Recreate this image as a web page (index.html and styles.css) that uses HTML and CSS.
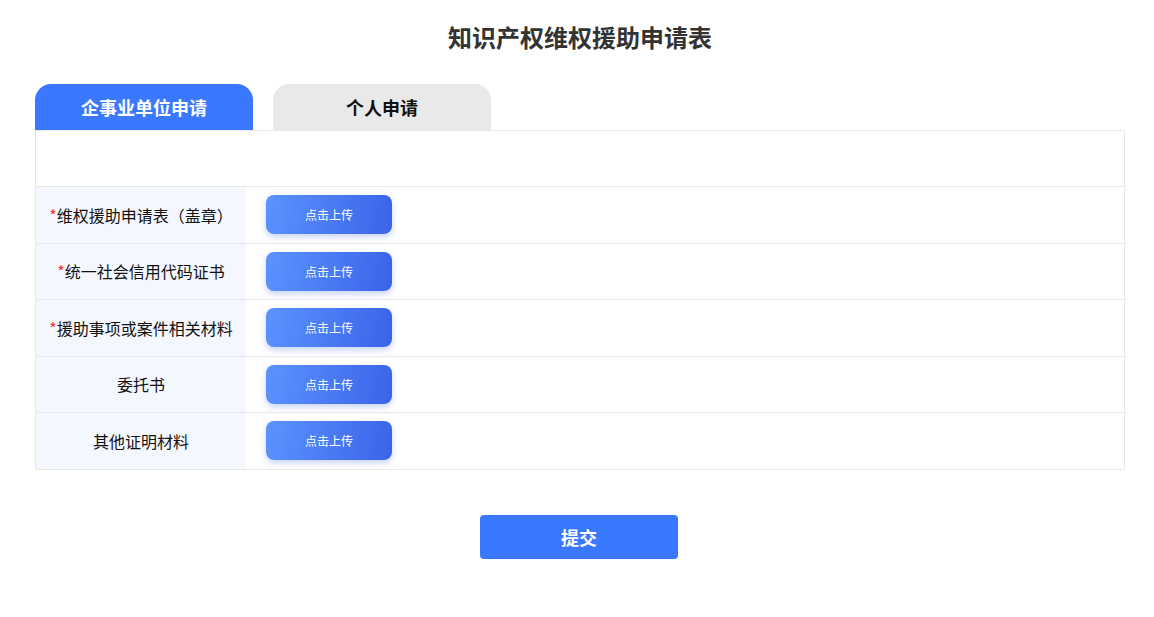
FILE: index.html
```html
<!DOCTYPE html>
<html lang="zh-CN">
<head>
  <meta charset="UTF-8">
  <meta name="viewport" content="width=device-width, initial-scale=1.0">
  <title>知识产权维权援助申请表</title>
  <link rel="stylesheet" href="styles.css">
</head>
<body>
  <div class="page">
    <h1 class="title">知识产权维权援助申请表</h1>

    <div class="tabs">
      <div class="tab active">企事业单位申请</div>
      <div class="tab">个人申请</div>
    </div>

    <div class="form-table">
      <div class="row row-blank"></div>
      <div class="row">
        <div class="label"><span class="req">*</span>维权援助申请表（盖章）</div>
        <div class="field"><button class="upload">点击上传</button></div>
      </div>
      <div class="row">
        <div class="label"><span class="req">*</span>统一社会信用代码证书</div>
        <div class="field"><button class="upload">点击上传</button></div>
      </div>
      <div class="row">
        <div class="label"><span class="req">*</span>援助事项或案件相关材料</div>
        <div class="field"><button class="upload">点击上传</button></div>
      </div>
      <div class="row">
        <div class="label">委托书</div>
        <div class="field"><button class="upload">点击上传</button></div>
      </div>
      <div class="row">
        <div class="label">其他证明材料</div>
        <div class="field"><button class="upload">点击上传</button></div>
      </div>
    </div>

    <div class="actions">
      <button class="submit">提交</button>
    </div>
  </div>
</body>
</html>
```

FILE: styles.css
```css
body {
  margin: 0;
  background: #fff;
  font-family: "Noto Sans CJK SC", "Noto Sans", sans-serif;
  color: #222;
}

.page {
  width: 1090px;
  margin-left: 35px;
}

.title {
  margin: 0;
  padding-top: 19px;
  height: 36px;
  line-height: 36px;
  text-align: center;
  font-size: 24px;
  font-weight: bold;
  color: #333;
}

.tabs {
  display: flex;
  gap: 20px;
  margin-top: 29px;
}

.tab {
  width: 218px;
  height: 46px;
  line-height: 46px;
  text-align: center;
  border-radius: 16px 16px 0 0;
  background: #e9e9e9;
  color: #111;
  font-size: 18px;
  font-weight: bold;
}

.tab.active {
  background: #3a78ff;
  color: #fff;
}

.form-table {
  border: 1px solid #e8e8e8;
  border-bottom: none;
}

.row {
  display: flex;
  height: 55.5px;
  border-bottom: 1px solid #e8e8e8;
}

.row-blank {
  height: 55px;
}

.label {
  width: 210px;
  display: flex;
  align-items: center;
  justify-content: center;
  background: #f4f7fe;
  font-size: 16px;
  color: #111;
}

.req {
  color: #ff2a2a;
}

.field {
  flex: 1;
  display: flex;
  align-items: center;
  padding-left: 20px;
}

.upload {
  width: 126px;
  height: 39px;
  border: none;
  border-radius: 8px;
  background: linear-gradient(100deg, #5b93ff, #3b63e9);
  box-shadow: 0 3px 6px rgba(70, 110, 230, 0.3);
  color: #fff;
  font-family: inherit;
  font-size: 12px;
  cursor: pointer;
}

.actions {
  display: flex;
  justify-content: center;
  margin-top: 45px;
  padding-right: 2px;
}

.submit {
  width: 198px;
  height: 44px;
  border: none;
  border-radius: 4px;
  background: #3a78ff;
  color: #fff;
  font-family: inherit;
  font-size: 18px;
  font-weight: bold;
  cursor: pointer;
}
```
